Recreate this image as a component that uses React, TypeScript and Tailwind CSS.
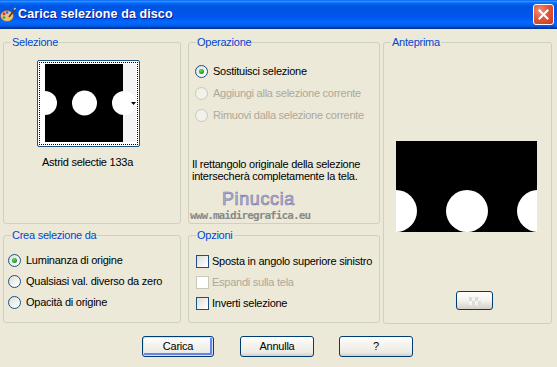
import React from "react";

function Radio({ checked = false, disabled = false }: { checked?: boolean; disabled?: boolean }) {
  return (
    <span
      className={
        "relative inline-flex items-center justify-center w-[13px] h-[13px] rounded-full border shrink-0 " +
        (disabled
          ? "border-[#cac8bb] bg-[#f2f1ea]"
          : "border-[#1c5180] bg-[linear-gradient(135deg,#dcdcd7_0%,#ffffff_90%)]")
      }
    >
      {checked && (
        <span className="w-[5px] h-[5px] rounded-full bg-[radial-gradient(circle_at_40%_35%,#5fe05f_0%,#21a121_60%,#118011_100%)]" />
      )}
    </span>
  );
}

function Check({ disabled = false }: { disabled?: boolean }) {
  return (
    <span
      className={
        "inline-block w-[13px] h-[13px] border shrink-0 " +
        (disabled
          ? "border-[#cac8bb] bg-white"
          : "border-[#1c5180] bg-[linear-gradient(135deg,#dcdcd7_0%,#ffffff_90%)]")
      }
    />
  );
}

function Group({
  title,
  className,
  children,
}: {
  title: string;
  className: string;
  children?: React.ReactNode;
}) {
  return (
    <fieldset className={"border border-[#d0d0bf] rounded-[3px] " + className}>
      <legend className="ml-[7px] px-[1px] leading-[13px] text-[#0046d5]">{title}</legend>
      {children}
    </fieldset>
  );
}

function XpButton({ label, main = false, className = "" }: { label: string; main?: boolean; className?: string }) {
  return (
    <button
      className={
        "h-[21px] rounded-[3px] border border-[#003c74] bg-[linear-gradient(180deg,#ffffff_0%,#f4f3ee_40%,#ecebe6_80%,#d6d0c5_100%)] text-black leading-none " +
        (main ? "shadow-[inset_0_0_0_1px_#cee7ff,inset_-1px_-1px_0_2px_#6982ee] " : "") +
        className
      }
    >
      {label}
    </button>
  );
}

export default function App() {
  return (
    <div className="w-[557px] h-[367px] bg-[#ece9d8] overflow-hidden font-['Liberation_Sans',Arial,sans-serif] text-[11px] tracking-[-0.25px] text-black">
      {/* Title bar */}
      <div className="h-[29px] flex items-center bg-[linear-gradient(180deg,#0058ee_0%,#3593ff_4%,#288eff_6%,#127dff_8%,#036ffc_10%,#0262ee_14%,#0057e5_20%,#0054e3_24%,#0055eb_56%,#005bf5_66%,#026afe_76%,#0062ef_86%,#0052d6_92%,#0040ab_94%,#003092_100%)]">
        <svg width="16" height="16" viewBox="0 0 16 16" className="shrink-0">
          <ellipse cx="7" cy="9" rx="6.5" ry="5.5" fill="#e8c48a" stroke="#8a5a2a" strokeWidth="0.8" />
          <circle cx="4" cy="7" r="1.4" fill="#e03030" />
          <circle cx="7" cy="5.5" r="1.3" fill="#2a6ae0" />
          <circle cx="4" cy="10.5" r="1.3" fill="#2fa83a" />
          <circle cx="8" cy="12" r="1.2" fill="#f0d020" />
          <path d="M9 10 L15 2" stroke="#6b3a1a" strokeWidth="1.6" />
          <path d="M14 2.5 L15.5 1" stroke="#c0c0c0" strokeWidth="1.6" />
        </svg>
        <span className="ml-[2px] text-white font-bold text-[12.5px] tracking-[0.1px] [text-shadow:1px_1px_#0a1a8a]">
          Carica selezione da disco
        </span>
        <div className="ml-auto mr-[3px] w-[21px] h-[21px] rounded-[3px] border border-white bg-[radial-gradient(circle_at_30%_30%,#f0907a_0%,#e0563b_45%,#c8381e_100%)] flex items-center justify-center">
          <svg width="11" height="11" viewBox="0 0 11 11">
            <path d="M1.5 1.5 L9.5 9.5 M9.5 1.5 L1.5 9.5" stroke="white" strokeWidth="2" strokeLinecap="square" />
          </svg>
        </div>
      </div>

      {/* Body */}
      <div className="flex pl-[3px] pt-[7px]">
        {/* Column 1 */}
        <div className="flex flex-col w-[178px]">
          <Group title="Selezione" className="h-[188px]">
            <div className="pl-[33px] pt-[11px]">
              <div className="w-[103px] h-[87px] border border-[#1c5180] rounded-[2px] bg-white p-[1px]">
                <div className="w-full h-full border border-dotted border-black pl-[5px] pt-[1px]">
                  <svg width="91" height="78" viewBox="0 0 91 78" className="block">
                    <rect x="0" y="0" width="78" height="78" fill="#000" />
                    <rect x="78" y="0" width="13" height="78" fill="#f4f4f4" />
                    <circle cx="0" cy="39" r="12" fill="#fff" />
                    <circle cx="39.5" cy="39" r="12.5" fill="#fff" />
                    <circle cx="79" cy="39" r="12" fill="#fff" />
                    <path d="M86 38 L91 38 L88.5 41 Z" fill="#000" />
                  </svg>
                </div>
              </div>
              <div className="mt-[9px] pl-[5px] leading-[13px] whitespace-nowrap">Astrid selectie 133a</div>
            </div>
          </Group>
          <Group title="Crea selezione da" className="mt-[5px] h-[94px]">
            <div className="pl-[4px] pt-[12px] flex flex-col">
              <label className="h-[21px] flex items-start gap-[5px] leading-[13px] whitespace-nowrap">
                <Radio checked />
                <span>Luminanza di origine</span>
              </label>
              <label className="h-[21px] flex items-start gap-[5px] leading-[13px] whitespace-nowrap">
                <Radio />
                <span>Qualsiasi val. diverso da zero</span>
              </label>
              <label className="h-[21px] flex items-start gap-[5px] leading-[13px] whitespace-nowrap">
                <Radio />
                <span>Opacità di origine</span>
              </label>
            </div>
          </Group>
        </div>

        {/* Column 2 */}
        <div className="flex flex-col w-[192px] ml-[7px]">
          <Group title="Operazione" className="h-[188px]">
            <div className="pl-[6px] pt-[16px] flex flex-col">
              <label className="h-[22px] flex items-start gap-[5px] leading-[13px] whitespace-nowrap">
                <Radio checked />
                <span>Sostituisci selezione</span>
              </label>
              <label className="h-[22px] flex items-start gap-[5px] leading-[13px] whitespace-nowrap text-[#aca899]">
                <Radio disabled />
                <span>Aggiungi alla selezione corrente</span>
              </label>
              <label className="h-[22px] flex items-start gap-[5px] leading-[13px] whitespace-nowrap text-[#aca899]">
                <Radio disabled />
                <span>Rimuovi dalla selezione corrente</span>
              </label>
            </div>
            <p className="pl-[3px] mt-[28px] leading-[11.5px] whitespace-nowrap">
              Il rettangolo originale della selezione
              <br />
              intersecherà completamente la tela.
            </p>
            <div className="mt-[9px] pl-[33px] leading-[16px] text-[18px] tracking-[0.6px] text-[#b2b2da] [-webkit-text-stroke:0.6px_#7a7aaa]">
              Pinuccia
            </div>
            <div className="pl-[1px] mt-[3px] leading-[11px] text-[11px] font-bold text-[#8a8a8a] font-['DejaVu_Sans_Mono',monospace] tracking-[-0.9px]">
              www.maidiregrafica.eu
            </div>
          </Group>
          <Group title="Opzioni" className="mt-[5px] h-[94px]">
            <div className="pl-[7px] pt-[13px] flex flex-col">
              <label className="h-[21px] flex items-start gap-[3px] leading-[13px] whitespace-nowrap">
                <Check />
                <span>Sposta in angolo superiore sinistro</span>
              </label>
              <label className="h-[21px] flex items-start gap-[3px] leading-[13px] whitespace-nowrap text-[#aca899]">
                <Check disabled />
                <span>Espandi sulla tela</span>
              </label>
              <label className="h-[21px] flex items-start gap-[3px] leading-[13px] whitespace-nowrap">
                <Check />
                <span>Inverti selezione</span>
              </label>
            </div>
          </Group>
        </div>

        {/* Column 3 */}
        <Group title="Anteprima" className="ml-[3px] w-[169px] h-[288px]">
          <div className="pl-[12px] pt-[92px]">
            <svg width="141" height="91" viewBox="0 0 141 91" className="block">
              <rect x="0" y="0" width="141" height="91" fill="#000" />
              <circle cx="0" cy="70" r="21" fill="#fff" />
              <circle cx="71" cy="70" r="21" fill="#fff" />
              <circle cx="142" cy="70" r="21" fill="#fff" />
            </svg>
          </div>
          <div className="pl-[72px] mt-[59px]">
            <button className="w-[37px] h-[19px] rounded-[3px] border border-[#003c74] bg-[linear-gradient(180deg,#ffffff_0%,#f4f3ee_50%,#d6d0c5_100%)] flex items-center justify-center">
              <svg width="12" height="8" viewBox="0 0 12 8">
                <rect x="0" y="0" width="12" height="8" fill="#f4f4f4" />
                <rect x="0" y="0" width="3" height="4" fill="#dcdcdc" />
                <rect x="6" y="0" width="3" height="4" fill="#dcdcdc" />
                <rect x="3" y="4" width="3" height="4" fill="#dcdcdc" />
                <rect x="9" y="4" width="3" height="4" fill="#dcdcdc" />
              </svg>
            </button>
          </div>
        </Group>
      </div>

      {/* Buttons */}
      <div className="flex mt-[12px] pl-[142px]">
        <XpButton label="Carica" main className="w-[72px]" />
        <XpButton label="Annulla" className="w-[74px] ml-[26px]" />
        <XpButton label="?" className="w-[74px] ml-[25px]" />
      </div>
    </div>
  );
}
